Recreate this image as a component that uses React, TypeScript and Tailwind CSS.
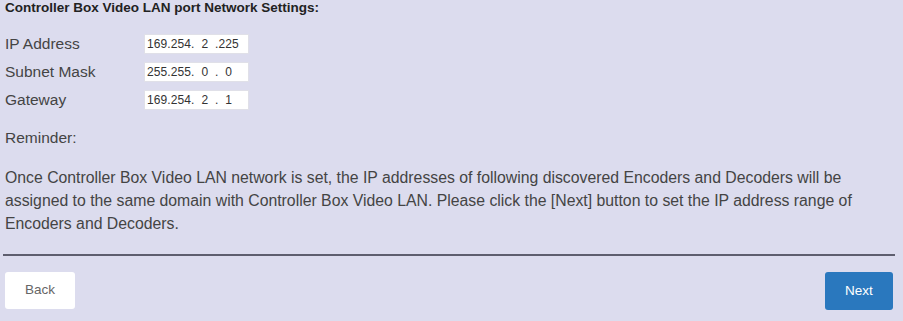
import React from 'react'

const rows = [
  { label: 'IP Address', value: '169.254.  2  .225' },
  { label: 'Subnet Mask', value: '255.255.  0  .  0' },
  { label: 'Gateway', value: '169.254.  2  .  1' },
]

export default function App() {
  return (
    <div
      className="w-[903px] h-[321px] bg-[#dcdcee] text-[#3a3a3a] overflow-hidden"
      style={{ fontFamily: '"Liberation Sans", Arial, sans-serif' }}
    >
      <div className="pl-[5px] pt-[1px]">
        <h2 className="text-[13.5px] leading-[14px] font-bold text-[#222]">
          Controller Box Video LAN port Network Settings:
        </h2>

        <div className="mt-[19px] flex flex-col gap-[8px]">
          {rows.map(r => (
            <div key={r.label} className="flex items-center h-[20px]">
              <span className="w-[139px] text-[15.5px] text-[#444]">{r.label}</span>
              <input
                readOnly
                value={r.value}
                className="w-[105px] h-[20px] bg-white border border-[#e0e0e8] px-[2px] text-[12px] tracking-[0.1px] text-[#333] whitespace-pre outline-none"
                style={{ fontFamily: '"Liberation Sans", Arial, sans-serif' }}
              />
            </div>
          ))}
        </div>

        <p className="mt-[20px] text-[15.5px] leading-[16px] text-[#444]">Reminder:</p>

        <p className="mt-[20px] text-[15.8px] leading-[23px] text-[#444]">
          Once Controller Box Video LAN network is set, the IP addresses of following discovered Encoders and Decoders will be
          <br />
          assigned to the same domain with Controller Box Video LAN. Please click the [Next] button to set the IP address range of
          <br />
          Encoders and Decoders.
        </p>
      </div>

      <div className="mt-[19px] ml-[3px] mr-[8px] h-[2px] bg-[#5e5e6e]" />

      <div className="mt-[16px] flex justify-between pl-[5px] pr-[10px]">
        <button className="w-[70px] h-[37px] bg-white rounded-[3px] text-[13.5px] text-[#666]">Back</button>
        <button className="w-[68px] h-[38px] bg-[#2a78be] rounded-[3px] text-[13.5px] text-white">Next</button>
      </div>
    </div>
  )
}
